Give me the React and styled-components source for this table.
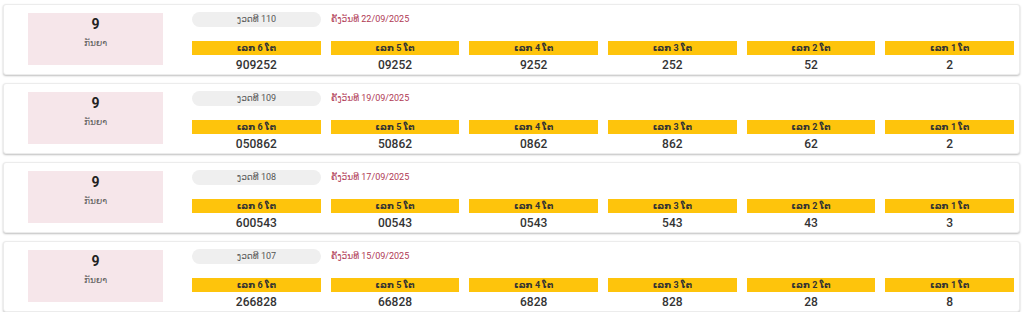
import React from "react";
import styled, { createGlobalStyle } from "styled-components";

const draws = [
  { round: 110, date: "22/09/2025", numbers: ["909252", "09252", "9252", "252", "52", "2"] },
  { round: 109, date: "19/09/2025", numbers: ["050862", "50862", "0862", "862", "62", "2"] },
  { round: 108, date: "17/09/2025", numbers: ["600543", "00543", "0543", "543", "43", "3"] },
  { round: 107, date: "15/09/2025", numbers: ["266828", "66828", "6828", "828", "28", "8"] },
];

const labels = [6, 5, 4, 3, 2, 1];

const GlobalStyle = createGlobalStyle`
  body {
    margin: 0;
    background: #fff;
    font-family: Roboto, "DejaVu Sans", sans-serif;
  }
`;

const List = styled.div`
  display: flex;
  flex-direction: column;
  gap: 8px;
  padding: 4px 4px 0 3px;
`;

const Card = styled.div`
  display: flex;
  align-items: flex-start;
  gap: 29px;
  height: 71px;
  box-sizing: border-box;
  padding: 0 5px 0 24px;
  background: #fff;
  border: 1px solid #ececec;
  border-radius: 3px;
  box-shadow: 0 1px 2px rgba(0, 0, 0, 0.25);
`;

const MonthBox = styled.div`
  width: 135px;
  height: 52px;
  flex: none;
  margin-top: 8px;
  background: #f6e6ea;
  display: flex;
  flex-direction: column;
  align-items: center;
  padding-top: 2px;
  box-sizing: border-box;
`;

const Day = styled.div`
  font-size: 14px;
  font-weight: 700;
  color: #222;
  line-height: 18px;
`;

const Month = styled.div`
  font-size: 9px;
  color: #555;
  line-height: 14px;
  margin-top: 3px;
`;

const Body = styled.div`
  flex: 1;
  display: flex;
  flex-direction: column;
  padding-top: 7px;
`;

const Meta = styled.div`
  display: flex;
  align-items: center;
  gap: 10px;
  height: 15px;
  margin-bottom: 14px;
`;

const Pill = styled.div`
  width: 129px;
  height: 15px;
  border-radius: 8px;
  background: #efefef;
  color: #555;
  font-size: 9px;
  line-height: 15px;
  text-align: center;
`;

const DateText = styled.div`
  font-size: 9px;
  color: #b03a55;
  line-height: 15px;
`;

const Grid = styled.div`
  display: grid;
  grid-template-columns: repeat(6, 1fr);
  column-gap: 10px;
`;

const Cell = styled.div`
  display: flex;
  flex-direction: column;
  align-items: center;
`;

const Label = styled.div`
  width: 100%;
  height: 14px;
  background: #fec40c;
  color: #333;
  font-size: 9px;
  font-weight: 700;
  line-height: 14px;
  text-align: center;
`;

const Value = styled.div`
  font-size: 12px;
  font-weight: 500;
  color: #333;
  line-height: 18px;
  padding-top: 1px;
`;

const DrawCard = ({ round, date, numbers }) => (
  <Card>
    <MonthBox>
      <Day>9</Day>
      <Month>ກັນຍາ</Month>
    </MonthBox>
    <Body>
      <Meta>
        <Pill>ງວດທີ {round}</Pill>
        <DateText>ຄັ້ງວັນທີ {date}</DateText>
      </Meta>
      <Grid>
        {numbers.map((n, idx) => (
          <Cell key={idx}>
            <Label>ເລກ {labels[idx]} ໂຕ</Label>
            <Value>{n}</Value>
          </Cell>
        ))}
      </Grid>
    </Body>
  </Card>
);

const App = () => (
  <>
    <GlobalStyle />
    <List>
      {draws.map(d => (
        <DrawCard key={d.round} {...d} />
      ))}
    </List>
  </>
);

export default App;
